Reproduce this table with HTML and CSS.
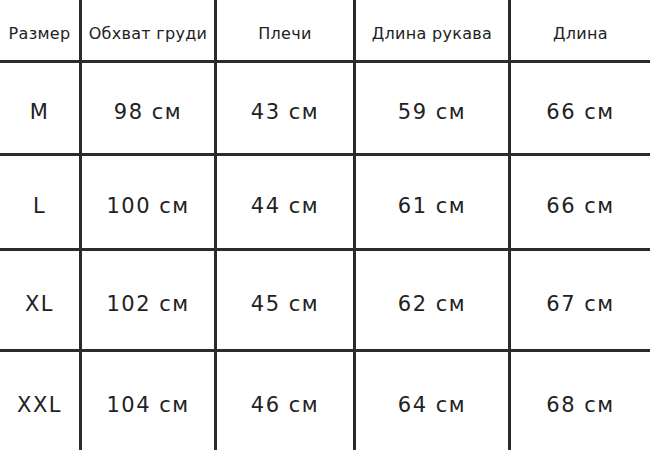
FILE: index.html
```html
<!DOCTYPE html>
<html lang="ru">
<head>
<meta charset="utf-8">
<link rel="stylesheet" href="styles.css">
</head>
<body>
<div class="chart">
  <div class="cell head">Размер</div>
  <div class="cell head">Обхват груди</div>
  <div class="cell head">Плечи</div>
  <div class="cell head">Длина рукава</div>
  <div class="cell head">Длина</div>

  <div class="cell">M</div>
  <div class="cell">98 см</div>
  <div class="cell">43 см</div>
  <div class="cell">59 см</div>
  <div class="cell">66 см</div>

  <div class="cell">L</div>
  <div class="cell">100 см</div>
  <div class="cell">44 см</div>
  <div class="cell">61 см</div>
  <div class="cell">66 см</div>

  <div class="cell">XL</div>
  <div class="cell">102 см</div>
  <div class="cell">45 см</div>
  <div class="cell">62 см</div>
  <div class="cell">67 см</div>

  <div class="cell">XXL</div>
  <div class="cell">104 см</div>
  <div class="cell">46 см</div>
  <div class="cell">64 см</div>
  <div class="cell">68 см</div>
</div>
</body>
</html>
```
FILE: styles.css
```css
html, body {
  margin: 0;
  padding: 0;
  background: #ffffff;
}
.chart {
  width: 650px;
  height: 450px;
  display: grid;
  grid-template-columns: 79px 132px 136px 152px 1fr;
  grid-template-rows: 60px 90px 92px 98px 1fr;
  gap: 3px;
  background: #2b2b2b;
  overflow: hidden;
}
.cell {
  background: #ffffff;
  display: flex;
  align-items: center;
  justify-content: center;
  font-family: "DejaVu Sans", sans-serif;
  font-size: 21px;
  letter-spacing: 1.5px;
  color: #222222;
  padding-top: 8px;
  box-sizing: border-box;
  white-space: nowrap;
}
.cell.head {
  font-size: 16px;
  letter-spacing: 0.3px;
  padding-top: 6px;
}
```
